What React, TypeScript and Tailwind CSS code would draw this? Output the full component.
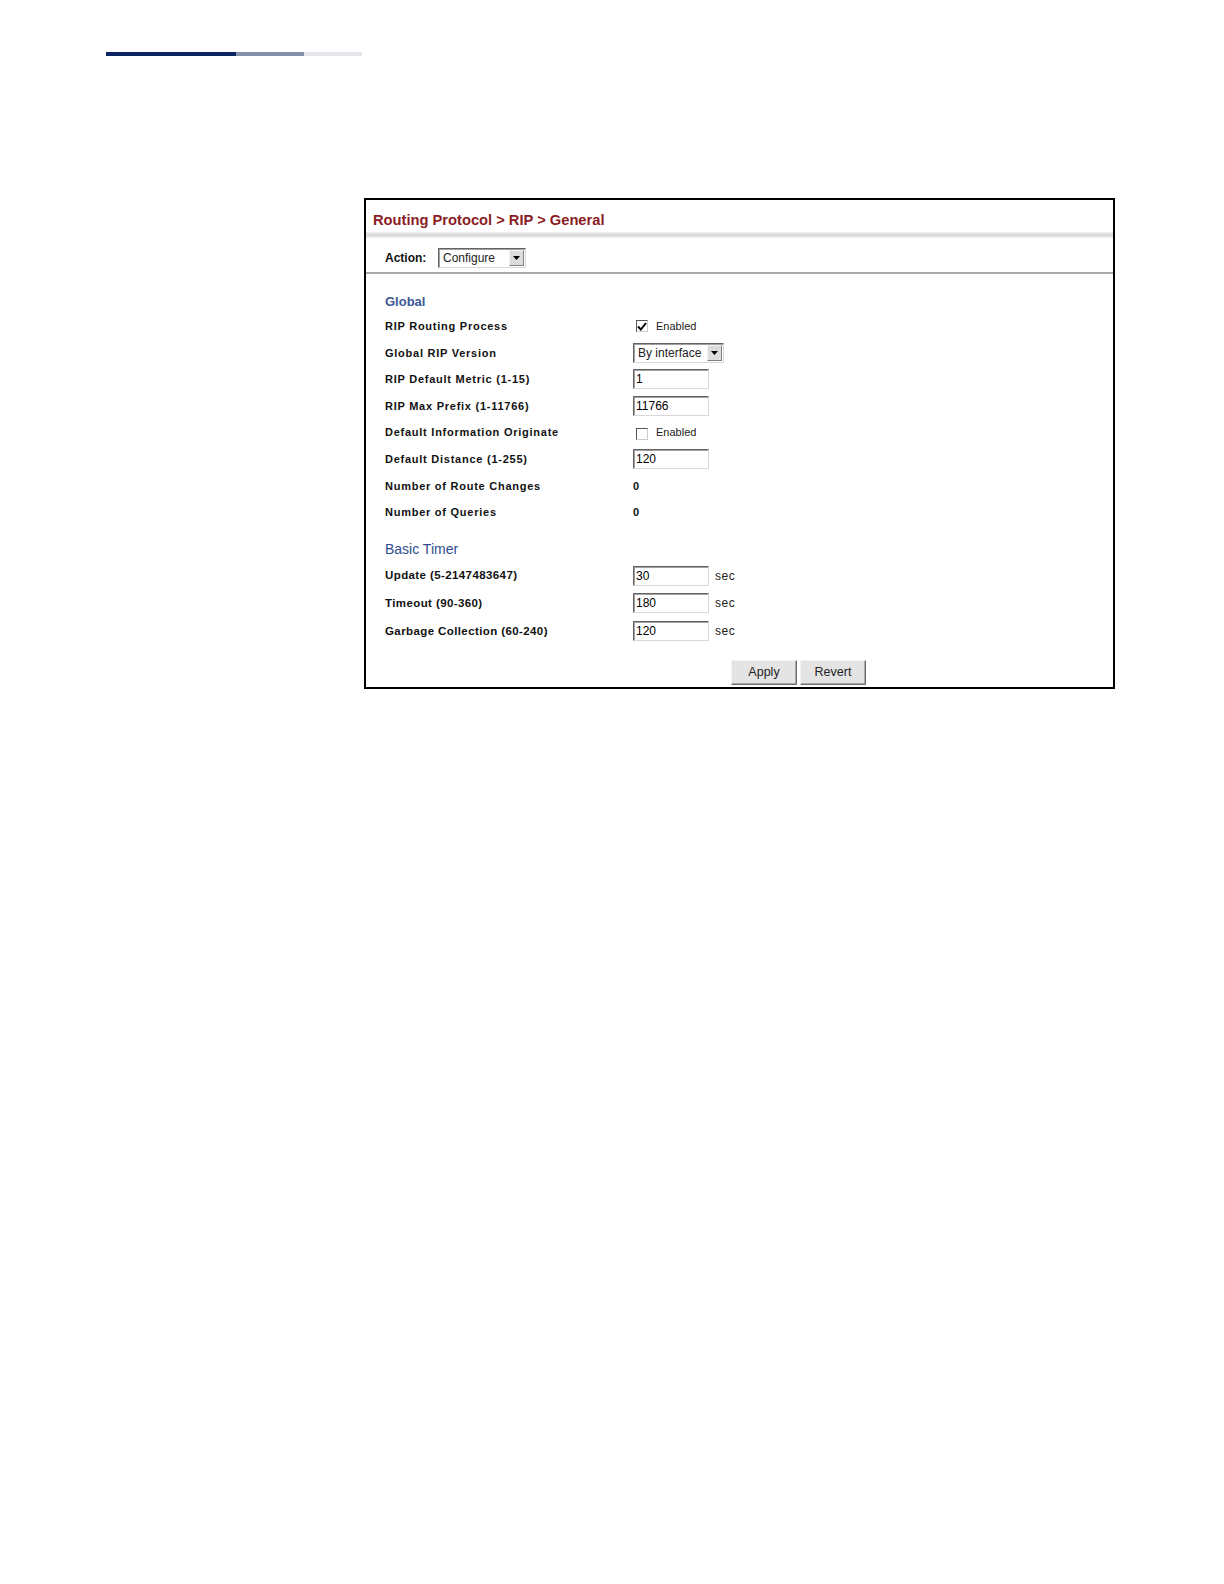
import React from "react";

const font = { fontFamily: '"Liberation Sans", Arial, sans-serif' };

function TextBox({ value }: { value: string }) {
  return (
    <div className="w-[76px] h-[20px] bg-white border border-t-[#646464] border-l-[#646464] border-b-[#d8d8d8] border-r-[#d8d8d8] shadow-[inset_1px_1px_0_#a0a0a0] flex items-center pl-[2px] text-[12px] text-black">
      {value}
    </div>
  );
}

function Select({ value, w }: { value: string; w: string }) {
  return (
    <div
      className={`${w} h-[20px] bg-white border border-t-[#646464] border-l-[#646464] border-b-[#d8d8d8] border-r-[#d8d8d8] shadow-[inset_1px_1px_0_#a0a0a0] flex items-center justify-between pl-[4px] pr-[1px] text-[12px] text-[#222]`}
    >
      <span>{value}</span>
      <span className="w-[15px] h-[16px] bg-[#dcdcdc] border border-t-[#f4f4f4] border-l-[#f4f4f4] border-b-[#808080] border-r-[#808080] flex items-center justify-center">
        <svg width="7" height="4" viewBox="0 0 7 4">
          <polygon points="0,0 7,0 3.5,4" fill="#000" />
        </svg>
      </span>
    </div>
  );
}

function Checkbox({ checked }: { checked: boolean }) {
  return (
    <div className="w-[12px] h-[12px] bg-white border border-t-[#555] border-l-[#555] border-b-[#ccc] border-r-[#ccc] flex items-center justify-center">
      {checked && (
        <svg width="10" height="9" viewBox="0 0 10 9">
          <path d="M1 4.5 L3.8 7.5 L9 1" stroke="#000" strokeWidth="2" fill="none" />
        </svg>
      )}
    </div>
  );
}

function Row({
  label,
  children,
  timer = false,
}: {
  label: string;
  children: React.ReactNode;
  timer?: boolean;
}) {
  return (
    <div className={`flex items-center ${timer ? "h-[27.8px]" : "h-[26.6px]"}`}>
      <div
        className={`w-[248px] font-bold text-[#111] ${
          timer ? "text-[11.5px] tracking-[0.4px]" : "text-[11px] tracking-[0.75px]"
        }`}
      >
        {label}
      </div>
      <div className="flex items-center">{children}</div>
    </div>
  );
}

function Btn({ label }: { label: string }) {
  return (
    <div className="w-[66px] h-[25px] bg-[#e4e4e4] border border-t-[#f4f4f4] border-l-[#f4f4f4] border-b-[#6e6e6e] border-r-[#6e6e6e] shadow-[inset_-1px_-1px_0_#a8a8a8] flex items-center justify-center text-[12.5px] text-[#222]">
      {label}
    </div>
  );
}

function Sec() {
  return <span className="ml-[6px] text-[12px] tracking-[0.5px] text-[#222]">sec</span>;
}

export default function App() {
  return (
    <div className="w-[1224px] h-[1584px] bg-white relative" style={font}>
      <div className="pt-[52px] pl-[106px] flex">
        <div className="w-[130px] h-[4px] bg-[#0c2461]" />
        <div className="w-[68px] h-[4px] bg-[#8590ad]" />
        <div className="w-[58px] h-[4px] bg-[#e6e7ea]" />
      </div>
      <div className="mt-[142px] ml-[364px] w-[751px] h-[491px] border-2 border-black flex flex-col">
        <div className="h-[32px] flex items-center pl-[7px] pt-[8px] text-[14.7px] font-bold text-[#8a1c24]">
          Routing Protocol &gt; RIP &gt; General
        </div>
        <div className="h-[6px] bg-gradient-to-b from-[#f2f2f2] via-[#d4d4d4] to-[#f4f4f4]" />
        <div className="h-[36px] flex items-center pt-[5px] pl-[19px] border-b-2 border-b-[#a8a8a8]">
          <span className="text-[12px] font-bold text-[#111] w-[53px]">Action:</span>
          <Select value="Configure" w="w-[88px]" />
        </div>
        <div className="pl-[19px]">
          <div className="mt-[13px] h-[26px] pt-[4px] flex items-center text-[13px] font-semibold text-[#3c5896]">
            Global
          </div>
          <Row label="RIP Routing Process">
            <div className="pl-[3px] flex items-center gap-[8px]">
              <Checkbox checked />
              <span className="text-[11px] text-[#222]">Enabled</span>
            </div>
          </Row>
          <Row label="Global RIP Version">
            <Select value="By interface" w="w-[91px]" />
          </Row>
          <Row label="RIP Default Metric (1-15)">
            <TextBox value="1" />
          </Row>
          <Row label="RIP Max Prefix (1-11766)">
            <TextBox value="11766" />
          </Row>
          <Row label="Default Information Originate">
            <div className="pl-[3px] pt-[3px] flex items-center gap-[8px]">
              <Checkbox checked={false} />
              <span className="text-[11px] text-[#222] -mt-[4px]">Enabled</span>
            </div>
          </Row>
          <Row label="Default Distance (1-255)">
            <TextBox value="120" />
          </Row>
          <Row label="Number of Route Changes">
            <span className="text-[11px] font-bold text-[#111]">0</span>
          </Row>
          <Row label="Number of Queries">
            <span className="text-[11px] font-bold text-[#111]">0</span>
          </Row>
          <div className="mt-[10px] h-[26px] pt-[2px] flex items-center text-[14px] text-[#2e4c8e]">Basic Timer</div>
          <Row label="Update (5-2147483647)" timer>
            <TextBox value="30" />
            <Sec />
          </Row>
          <Row label="Timeout (90-360)" timer>
            <TextBox value="180" />
            <Sec />
          </Row>
          <Row label="Garbage Collection (60-240)" timer>
            <TextBox value="120" />
            <Sec />
          </Row>
        </div>
        <div className="mt-[15px] flex gap-[3px] pl-[365px]">
          <Btn label="Apply" />
          <Btn label="Revert" />
        </div>
      </div>
    </div>
  );
}
